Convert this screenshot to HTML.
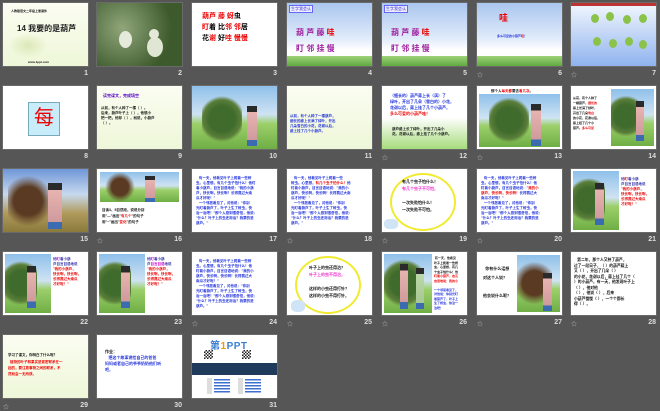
<!DOCTYPE html>
<html><head><meta charset="utf-8"><style>
*{margin:0;padding:0;box-sizing:border-box}
body{width:660px;height:410px;background:#565656;position:relative;overflow:hidden;font-family:"Liberation Sans","Noto Sans CJK SC",sans-serif}
.s{position:absolute;width:85px;height:63px;background:#fff;overflow:hidden;box-shadow:0 0 0 1px #6a6a6a}
.n{position:absolute;color:#ddd;font-size:7px;font-weight:bold;text-align:right;width:20px}
.st{position:absolute;color:#bbb;font-size:6px}
.t{position:absolute;font-size:5px;line-height:6px;font-weight:bold}
.b{color:#2233dd}.r{color:#e00}.k{color:#111}
.sky{background:linear-gradient(#a9c6ee,#dfeafa 55%,#fff 75%)}
.grass{position:absolute;left:0;right:0;bottom:0;height:10px;background:linear-gradient(#9fd27a,#5faa3f)}
.pic{background:linear-gradient(#8fc0ea 0%,#cfe3f3 45%,#9ccf6a 60%,#6fae45 100%)}
.tree{position:absolute;background:radial-gradient(circle,#3f6b2c 40%,#5b7e3a 60%,transparent 72%)}
.man{position:absolute;background:linear-gradient(#2a2a2a 0 15%,#e8b4b0 15%,#cf9a9c 85%,#3b6bb0 85%)}
.pale{background:linear-gradient(#fbfdf2,#eef7d8)}
</style></head><body>

<!-- Row 1 -->
<div class="s pale" style="left:3px;top:3px">
 <div class="t k" style="left:8px;top:5px;font-size:3px">人教版语文二年级上册课件</div>
 <div style="position:absolute;left:14px;top:20px;font-size:8px;font-weight:bold;color:#222">14 我要的是葫芦</div>
 <div style="position:absolute;left:5px;top:30px;width:40px;height:25px;background:radial-gradient(#dbe8b8,transparent 70%)"></div>
 <div class="t k" style="left:25px;top:56px;font-size:3px">www.1ppt.com</div>
</div>
<div class="s" style="left:97px;top:3px;background:radial-gradient(circle at 30% 40%,#8fa67a,#3d5a2c 70%)">
 <div style="position:absolute;left:22px;top:28px;width:13px;height:17px;border-radius:50%;background:#e6eadb"></div>
 <div style="position:absolute;left:50px;top:34px;width:16px;height:20px;border-radius:50%;background:#dfe6d3"></div>
 <div style="position:absolute;left:52px;top:26px;width:10px;height:10px;border-radius:50%;background:#e3e8d8"></div>
</div>
<div class="s" style="left:192px;top:3px">
 <div class="t" style="left:10px;top:8px;font-size:7px;line-height:11px"><span class="r">葫芦</span> <span class="r">藤</span> <span class="r">蚜</span>虫<br><span class="r">盯</span>着 比<span class="r">邻</span> <span class="r">邻</span>居<br><span class="k">花</span><span class="r">谢</span> 好<span class="r">哇</span> <span class="r">慢慢</span></div>
</div>
<div class="s sky" style="left:287px;top:3px">
 <div style="position:absolute;left:2px;top:2px;font-size:4px;color:#33c;border:1px solid #66f;background:#eef;padding:0 1px">生字我会认</div>
 <div class="t" style="left:9px;top:22px;font-size:8px;line-height:16px;color:#a020a0">葫 芦 藤 <span class="r">哇</span><br>盯 邻 挂 慢</div>
 <div class="grass"></div>
</div>
<div class="s sky" style="left:382px;top:3px">
 <div style="position:absolute;left:2px;top:2px;font-size:4px;color:#33c;border:1px solid #66f;background:#eef;padding:0 1px">生字我会认</div>
 <div class="t" style="left:9px;top:22px;font-size:8px;line-height:16px;color:#a020a0">葫 芦 藤 <span class="r">哇</span><br>盯 邻 挂 慢</div>
 <div class="grass"></div>
</div>
<div class="s sky" style="left:477px;top:3px">
 <div class="t r" style="left:22px;top:12px;font-size:9px">哇</div>
 <div class="t b" style="left:20px;top:30px;font-size:3px">多么可爱的小葫芦<span class="r">哇</span>！</div>
 <div class="grass"></div>
</div>
<div class="s" style="left:571px;top:3px;background:linear-gradient(#eef4fd,#8fb3ee);border-top:3px solid #b33">
 <div style="position:absolute;left:20px;top:8px;width:8px;height:9px;border-radius:50%;background:#8bc34a"></div>
 <div style="position:absolute;left:35px;top:6px;width:8px;height:9px;border-radius:50%;background:#8bc34a"></div>
 <div style="position:absolute;left:52px;top:9px;width:8px;height:9px;border-radius:50%;background:#8bc34a"></div>
 <div style="position:absolute;left:68px;top:8px;width:8px;height:9px;border-radius:50%;background:#8bc34a"></div>
 <div style="position:absolute;left:22px;top:31px;width:8px;height:9px;border-radius:50%;background:#8bc34a"></div>
 <div style="position:absolute;left:38px;top:33px;width:8px;height:9px;border-radius:50%;background:#8bc34a"></div>
 <div style="position:absolute;left:54px;top:31px;width:8px;height:9px;border-radius:50%;background:#8bc34a"></div>
 <div style="position:absolute;left:68px;top:34px;width:8px;height:9px;border-radius:50%;background:#8bc34a"></div>
</div>

<!-- Row 2 -->
<div class="s" style="left:3px;top:86px">
 <div style="position:absolute;left:25px;top:16px;width:32px;height:34px;background:#c9ecfa;border:1px solid #7ab"></div>
 <div class="t r" style="left:31px;top:21px;font-size:20px;line-height:22px;font-weight:normal">每</div>
</div>
<div class="s pale" style="left:97px;top:86px">
 <div class="t" style="left:6px;top:7px;font-size:4px;color:#50c">读完课文，完成填空</div>
 <div class="t k" style="left:4px;top:20px;font-size:3.5px;line-height:5px">从前，有个人种了一棵（ ）。<br>后来，葫芦叶子上（ ），他想小<br>把一把，他却（ ），就说，小葫芦<br>（ ）。</div>
</div>
<div class="s pic" style="left:192px;top:86px">
 <div class="tree" style="left:10px;top:8px;width:40px;height:50px"></div>
 <div class="man" style="left:55px;top:20px;width:10px;height:40px"></div>
</div>
<div class="s pale" style="left:287px;top:86px">
 <div class="t b" style="left:3px;top:28px;font-size:3.5px;line-height:5px">从前，有个人种了一棵葫芦，<br>细长的藤上长满了绿叶，开出<br>几朵雪白的小花，花谢以后，<br>藤上挂了几个小葫芦。</div>
</div>
<div class="s" style="left:382px;top:86px;background:linear-gradient(#fff 50%,#a6dc7c)">
 <div class="t b" style="left:8px;top:7px;font-size:4px;line-height:6px">（细长的）葫芦藤上长（满）了<br>绿叶，开出了几朵（雪白的）小花。<br>花谢以后，藤上挂了几个小葫芦。<br><span class="r">多么可爱的小葫芦哇！</span></div>
 <div class="t k" style="left:10px;top:41px;font-size:3.5px;line-height:5px">葫芦藤上长了绿叶，开出了几朵小<br>花。花谢以后，藤上挂了几个小葫芦。</div>
</div>
<div class="s" style="left:477px;top:86px">
 <div class="t k" style="left:14px;top:2px;font-size:3.5px">那个人<span class="r">每天都</span>要去<span class="r">看几次</span>。</div>
 <div class="pic" style="position:absolute;left:2px;top:8px;width:81px;height:53px">
  <div class="tree" style="left:10px;top:2px;width:40px;height:48px"></div>
  <div class="man" style="left:52px;top:10px;width:10px;height:42px"></div>
 </div>
</div>
<div class="s" style="left:571px;top:86px">
 <div class="t k" style="left:2px;top:10px;font-size:3px;line-height:5px">从前，有个人种了<br>一棵葫芦，<span class="r">细长的</span><br>藤上长满了绿叶，<br>开出了几朵<span class="r">雪白</span><br>的小花，花谢以后，<br>藤上挂了几个小<br>葫芦。<span class="r">多么可爱</span></div>
 <div class="pic" style="position:absolute;left:40px;top:3px;width:43px;height:57px">
  <div class="tree" style="left:0px;top:3px;width:30px;height:48px"></div>
  <div class="man" style="left:25px;top:12px;width:8px;height:40px"></div>
 </div>
</div>

<!-- Row 3 -->
<div class="s pic" style="left:3px;top:169px;background:linear-gradient(#6f96d6,#c7d9ef 40%,#b09a5c 70%,#8a7a3c)">
 <div class="tree" style="left:5px;top:2px;width:40px;height:60px;background:radial-gradient(circle,#5a3a22 40%,transparent 70%)"></div>
 <div class="man" style="left:45px;top:14px;width:14px;height:46px"></div>
</div>
<div class="s" style="left:97px;top:169px">
 <div class="pic" style="position:absolute;left:3px;top:3px;width:79px;height:30px">
  <div class="tree" style="left:5px;top:0;width:30px;height:30px;background:radial-gradient(circle,#5a3a22 40%,transparent 70%)"></div>
  <div class="man" style="left:45px;top:4px;width:10px;height:26px"></div>
 </div>
 <div class="t k" style="left:5px;top:38px;font-size:3.5px;line-height:6px">自读3、5自然段，说说分别<br>用"—"画出"<span class="r">有几个</span>"的句子<br>用"~"画出"<span class="r">变化</span>"的句子</div>
</div>
<div class="s" style="left:192px;top:169px">
 <div class="t b" style="left:4px;top:7px;font-size:3.5px;line-height:5px">&nbsp;&nbsp;&nbsp;有一天，他看见叶子上爬着一些蚜<br>虫。心里想，有几个虫子怕什么！他盯<br>着小葫芦，自言自语地说："我的小葫<br>芦，快长啊，快长啊！长得赛过大南<br>瓜才好呢！"<br>&nbsp;&nbsp;&nbsp;一个邻居看见了，对他说："你别<br>光盯着葫芦了，叶子上生了蚜虫，快<br>治一治吧！"那个人感到很奇怪，他说：<br>"什么？叶子上的虫还用治？我要的是<br>葫芦。"</div>
</div>
<div class="s" style="left:287px;top:169px">
 <div class="t b" style="left:4px;top:7px;font-size:3.5px;line-height:5px">&nbsp;&nbsp;&nbsp;有一天，他看见叶子上爬着一些<br>蚜虫。心里想，<span class="r">有几个虫子怕什么！</span>他<br>盯着小葫芦，自言自语地说："我的小<br>葫芦，快长啊，快长啊！长得赛过大南<br>瓜才好呢！"<br>&nbsp;&nbsp;&nbsp;一个邻居看见了，对他说："你别<br>光盯着葫芦了，叶子上生了蚜虫，快<br>治一治吧！"那个人感到很奇怪，他说：<br>"什么？叶子上的虫还用治？我要的是<br>葫芦。"</div>
</div>
<div class="s" style="left:382px;top:169px">
 <div style="position:absolute;left:8px;top:4px;width:66px;height:58px;border:2px solid #f2ea30;border-radius:50%"></div>
 <div class="t k" style="left:20px;top:9px;font-size:4px;line-height:7px">有几个虫子怕什么！<br><span style="color:#e3c">有几个虫子不可怕。</span><br><br>一次失败怕什么！<br>一次失败不可怕。</div>
 <div style="position:absolute;left:2px;top:50px;width:14px;height:10px;background:#cfe4f7;border-radius:40%"></div>
</div>
<div class="s" style="left:477px;top:169px">
 <div class="t b" style="left:4px;top:7px;font-size:3.5px;line-height:5px">&nbsp;&nbsp;&nbsp;有一天，他看见叶子上爬着一些蚜<br>虫。心里想，有几个虫子怕什么！他<br>盯着小葫芦，自言自语地说："<span class="r">我的小</span><br><span class="r">葫芦，快长啊，快长啊！</span>长得赛过大<br>南瓜才好呢！"<br>&nbsp;&nbsp;&nbsp;一个邻居看见了，对他说："你别<br>光盯着葫芦了，叶子上生了蚜虫，快<br>治一治吧！"那个人感到很奇怪，他说：<br>"什么？叶子上的虫还用治？我要的是<br>葫芦。"</div>
</div>
<div class="s" style="left:571px;top:169px">
 <div class="pic" style="position:absolute;left:2px;top:2px;width:46px;height:59px">
  <div class="tree" style="left:0;top:3px;width:32px;height:52px"></div>
  <div class="man" style="left:22px;top:12px;width:9px;height:42px"></div>
 </div>
 <div class="t" style="left:50px;top:8px;font-size:3.5px;line-height:5px;color:#33a">他<span class="r">盯</span>着小葫<br>芦自言自语地说<br><span class="r">"我的小葫芦，<br>快长啊，快长啊，<br>长得赛过大南瓜<br>才好呢！"</span></div>
</div>

<!-- Row 4 -->
<div class="s" style="left:3px;top:252px">
 <div class="pic" style="position:absolute;left:2px;top:2px;width:46px;height:59px">
  <div class="tree" style="left:0;top:3px;width:32px;height:52px"></div>
  <div class="man" style="left:22px;top:12px;width:9px;height:42px"></div>
 </div>
 <div class="t" style="left:50px;top:5px;font-size:3.5px;line-height:5px;color:#33a">他<span style="color:#c0c">盯</span>着小葫<br>芦自言自语地说<br><span class="r">"我的小葫芦，<br>快长啊，快长啊，<br>长得赛过大南瓜<br>才好呢！"</span></div>
</div>
<div class="s" style="left:97px;top:252px">
 <div class="pic" style="position:absolute;left:2px;top:2px;width:46px;height:59px">
  <div class="tree" style="left:0;top:3px;width:32px;height:52px"></div>
  <div class="man" style="left:22px;top:12px;width:9px;height:42px"></div>
 </div>
 <div class="t" style="left:50px;top:5px;font-size:3.5px;line-height:5px;color:#33a">他<span style="color:#c0c">盯</span>着小葫<br>芦<span style="color:#c0c">自言自语</span>地说<br><span class="r">"我的小葫芦，<br>快长啊，快长啊，<br>长得赛过大南瓜<br>才好呢！"</span></div>
</div>
<div class="s" style="left:192px;top:252px">
 <div class="t b" style="left:4px;top:7px;font-size:3.5px;line-height:5px">&nbsp;&nbsp;&nbsp;有一天，他看见叶子上爬着一些蚜<br>虫。心里想，有几个虫子怕什么！他<br>盯着小葫芦，自言自语地说："我的小<br>葫芦，快长啊，快长啊！长得赛过大<br>南瓜才好呢！"<br>&nbsp;&nbsp;&nbsp;一个邻居看见了，对他说："你别<br>光盯着葫芦了，叶子上生了蚜虫，快<br>治一治吧！"那个人感到很奇怪，他说：<br>"什么？叶子上的虫还用治？我要的是<br>葫芦。"</div>
</div>
<div class="s" style="left:287px;top:252px">
 <div style="position:absolute;left:8px;top:4px;width:66px;height:58px;border:2px solid #f2ea30;border-radius:50%"></div>
 <div class="t k" style="left:22px;top:12px;font-size:4px;line-height:7px">叶子上的虫还用治？<br><span style="color:#e3c">叶子上的虫不用治。</span><br><br>这样的小虫还用打针？<br>这样的小虫不用打针。</div>
 <div style="position:absolute;left:4px;top:48px;width:14px;height:12px;background:#cfe4f7;border-radius:40%"></div>
</div>
<div class="s" style="left:382px;top:252px">
 <div class="pic" style="position:absolute;left:2px;top:2px;width:48px;height:59px">
  <div class="tree" style="left:0;top:3px;width:40px;height:52px"></div>
  <div class="man" style="left:16px;top:10px;width:8px;height:45px"></div>
  <div class="man" style="left:32px;top:14px;width:8px;height:41px;background:linear-gradient(#2a2a2a 0 15%,#bcd8a8 15%,#a7c793 85%,#3b6bb0 85%)"></div>
 </div>
 <div class="t k" style="left:52px;top:4px;font-size:3px;line-height:4.5px">&nbsp;有一天，他看见<br>叶子上爬着一些蚜<br>虫，心里想，有几<br>个虫子怕什么！他<br><span class="r">盯着小葫芦，自言<br>自语地说：我的小</span><br><br><span class="b">一个邻居看见了，<br>对他说：你别光盯<br>着葫芦了，叶子上<br>生了蚜虫，快治一<br>治吧！</span></div>
</div>
<div class="s" style="left:477px;top:252px">
 <div class="t k" style="left:6px;top:12px;font-size:4px;line-height:9px">&nbsp;&nbsp;你有什么话想<br>对这个人说？<br><br>他会说什么呢？</div>
 <div class="pic" style="position:absolute;left:40px;top:3px;width:43px;height:57px">
  <div class="tree" style="left:0;top:3px;width:35px;height:50px;background:radial-gradient(circle,#5a3a22 40%,transparent 70%)"></div>
  <div class="man" style="left:26px;top:18px;width:9px;height:38px"></div>
 </div>
</div>
<div class="s" style="left:571px;top:252px">
 <div class="t k" style="left:3px;top:6px;font-size:3.8px;line-height:5.5px">&nbsp;&nbsp;&nbsp;第二年，那个人又种了葫芦，<br>过了一段日子，（ ）的葫芦藤上<br>又（ ），开出了几朵（ ）<br>的小花，花谢以后，藤上挂了几个（<br>）的小葫芦。有一天，他发现叶子上<br>（ ），他对他<br>（ ），他说（ ），后来<br>小葫芦慢慢（ ），一个个都长<br>得（ ）。</div>
</div>

<!-- Row 5 -->
<div class="s pale" style="left:3px;top:335px">
 <div class="t k" style="left:5px;top:17px;font-size:3.5px">学习了课文，你明白了什么呢？</div>
 <div class="t r" style="left:5px;top:24px;font-size:3.5px;line-height:6px">&nbsp;&nbsp;植物的叶子和果实是紧密联系在一<br>起的，要注意事物之间的联系，不<br>然就会一无所获。</div>
</div>
<div class="s" style="left:97px;top:335px">
 <div class="t k" style="left:8px;top:14px;font-size:4px;line-height:6px">作业：<br><span class="b">&nbsp;&nbsp;&nbsp;把这个故事讲给自己的爸爸<br>妈妈或者自己的爷爷奶奶他们听<br>吧。</span></div>
</div>
<div class="s" style="left:192px;top:335px">
 <div style="position:absolute;left:18px;top:2px;font-size:10px;font-weight:bold;color:#3a7fd0;letter-spacing:0.5px">第<span style="color:#f39800">1</span>PPT</div>
 <div style="position:absolute;left:12px;top:15px;width:9px;height:9px;background:repeating-conic-gradient(#222 0 25%,#fff 0 50%) 0 0/3px 3px"></div>
 <div style="position:absolute;left:50px;top:15px;width:9px;height:9px;background:repeating-conic-gradient(#222 0 25%,#fff 0 50%) 0 0/3px 3px"></div>
 <div style="position:absolute;left:0;top:28px;width:85px;height:12px;background:#1f3a5a"></div>
 <div style="position:absolute;left:15px;top:43px;width:5px;height:16px;background:#ddd"></div>
 <div style="position:absolute;left:22px;top:44px;width:16px;height:14px;background:repeating-linear-gradient(#3b6fd0 0 1.5px,transparent 1.5px 3px)"></div>
 <div style="position:absolute;left:46px;top:43px;width:5px;height:16px;background:#ddd"></div>
 <div style="position:absolute;left:53px;top:44px;width:16px;height:14px;background:repeating-linear-gradient(#3b6fd0 0 1.5px,transparent 1.5px 3px)"></div>
</div>

<!-- numbers -->
<div class="n" style="left:68px;top:70px">1</div><div class="n" style="left:162px;top:70px">2</div><div class="n" style="left:257px;top:70px">3</div><div class="n" style="left:352px;top:70px">4</div><div class="n" style="left:447px;top:70px">5</div><div class="n" style="left:542px;top:70px">6</div><div class="n" style="left:636px;top:70px">7</div>
<div class="n" style="left:68px;top:153px">8</div><div class="n" style="left:162px;top:153px">9</div><div class="n" style="left:257px;top:153px">10</div><div class="n" style="left:352px;top:153px">11</div><div class="n" style="left:447px;top:153px">12</div><div class="n" style="left:542px;top:153px">13</div><div class="n" style="left:636px;top:153px">14</div>
<div class="n" style="left:68px;top:236px">15</div><div class="n" style="left:162px;top:236px">16</div><div class="n" style="left:257px;top:236px">17</div><div class="n" style="left:352px;top:236px">18</div><div class="n" style="left:447px;top:236px">19</div><div class="n" style="left:542px;top:236px">20</div><div class="n" style="left:636px;top:236px">21</div>
<div class="n" style="left:68px;top:319px">22</div><div class="n" style="left:162px;top:319px">23</div><div class="n" style="left:257px;top:319px">24</div><div class="n" style="left:352px;top:319px">25</div><div class="n" style="left:447px;top:319px">26</div><div class="n" style="left:542px;top:319px">27</div><div class="n" style="left:636px;top:319px">28</div>
<div class="n" style="left:68px;top:402px">29</div><div class="n" style="left:162px;top:402px">30</div><div class="n" style="left:257px;top:402px">31</div>
<!-- star marks -->
<div class="st" style="left:477px;top:70px">☆</div><div class="st" style="left:571px;top:70px">☆</div>
<div class="st" style="left:382px;top:153px">☆</div><div class="st" style="left:477px;top:153px">☆</div>
<div class="st" style="left:97px;top:236px">☆</div><div class="st" style="left:287px;top:236px">☆</div><div class="st" style="left:382px;top:236px">☆</div><div class="st" style="left:477px;top:236px">☆</div>
<div class="st" style="left:192px;top:319px">☆</div><div class="st" style="left:287px;top:319px">☆</div><div class="st" style="left:382px;top:319px">☆</div><div class="st" style="left:477px;top:319px">☆</div><div class="st" style="left:571px;top:319px">☆</div>
<div class="st" style="left:3px;top:402px">☆</div>
</body></html>
